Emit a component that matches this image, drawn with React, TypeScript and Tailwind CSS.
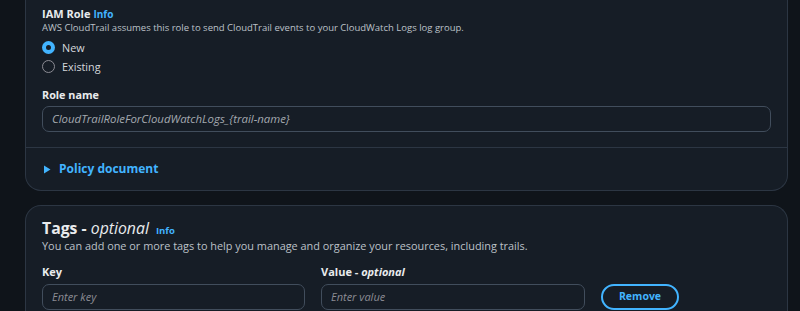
import React from "react";

const font = { fontFamily: '"Open Sans", "Noto Sans", sans-serif' };

function Radio({ checked, label }: { checked?: boolean; label: string }) {
  return (
    <div className="flex items-center gap-[7px] h-[19px]">
      {checked ? (
        <span className="w-[13px] h-[13px] rounded-full bg-[#42b4ff] flex items-center justify-center">
          <span className="w-[5px] h-[5px] rounded-full bg-[#161d26]" />
        </span>
      ) : (
        <span className="w-[13px] h-[13px] rounded-full border border-[#8c8c94]" />
      )}
      <span className="text-[10.8px] leading-[19px] text-[#d5d8dc]">{label}</span>
    </div>
  );
}

export default function App() {
  return (
    <div
      className="w-[800px] h-[311px] bg-[#0f141a] overflow-hidden pl-[25px] pr-[12px] flex flex-col"
      style={font}
    >
      <div className="border border-t-0 border-[#2c3643] rounded-b-[16px] bg-[#161d26] shrink-0">
        <div className="px-[16px] pt-[6px] pb-[15px]">
          <div className="flex items-baseline gap-[3px] h-[16px] leading-[16px]">
            <span className="text-[11px] font-bold text-[#e9ebed]">IAM Role</span>
            <span className="text-[10px] font-bold text-[#42b4ff]">Info</span>
          </div>
          <div className="text-[9.5px] text-[#bcc1c8] h-[12px] leading-[12px]">
            AWS CloudTrail assumes this role to send CloudTrail events to your CloudWatch Logs log group.
          </div>
          <div className="flex flex-col mt-[4px]">
            <Radio checked label="New" />
            <Radio label="Existing" />
          </div>
          <div className="mt-[11px] text-[10.8px] font-bold text-[#e9ebed] h-[16px] leading-[16px]">
            Role name
          </div>
          <div className="mt-[3px] h-[26px] rounded-[7px] border border-[#414d5c] flex items-center px-[9px]">
            <span className="text-[11.4px] italic text-[#a4a9b0]">
              CloudTrailRoleForCloudWatchLogs_{"{trail-name}"}
            </span>
          </div>
        </div>
        <div className="border-t border-[#2c3643] h-[43px] flex items-center px-[17px] gap-[8px]">
          <svg width="8" height="9" viewBox="0 0 8 9">
            <path d="M1 0.5 L7.5 4.5 L1 8.5 Z" fill="#42b4ff" />
          </svg>
          <span className="text-[12px] font-bold text-[#42b4ff]">Policy document</span>
        </div>
      </div>
      <div className="mt-[14px] border border-b-0 border-[#2c3643] rounded-t-[16px] bg-[#161d26] flex-1 px-[16px] pt-[11px]">
        <div className="flex items-baseline gap-[7px] h-[22px] leading-[22px]">
          <span className="text-[15.8px] font-bold text-[#e9ebed]">
            Tags - <span className="italic font-medium">optional</span>
          </span>
          <span className="text-[9.5px] font-bold text-[#42b4ff]">Info</span>
        </div>
        <div className="text-[10.9px] text-[#bcc1c8] h-[14px] leading-[14px]">
          You can add one or more tags to help you manage and organize your resources, including trails.
        </div>
        <div className="mt-[11px] flex gap-[16px]">
          <div className="w-[263px]">
            <div className="text-[11px] font-bold text-[#e9ebed] h-[16px] leading-[16px]">Key</div>
            <div className="mt-[4px] h-[26px] rounded-[7px] border border-[#414d5c] flex items-center px-[9px]">
              <span className="text-[11px] italic text-[#8c8c94]">Enter key</span>
            </div>
          </div>
          <div className="w-[264px]">
            <div className="text-[11px] font-bold text-[#e9ebed] h-[16px] leading-[16px]">
              Value - <span className="italic">optional</span>
            </div>
            <div className="mt-[4px] h-[26px] rounded-[7px] border border-[#414d5c] flex items-center px-[9px]">
              <span className="text-[11px] italic text-[#8c8c94]">Enter value</span>
            </div>
          </div>
          <div className="pt-[20px]">
            <div className="w-[78px] h-[26px] rounded-full border-2 border-[#42b4ff] flex items-center justify-center">
              <span className="text-[10.5px] font-bold text-[#42b4ff]">Remove</span>
            </div>
          </div>
        </div>
      </div>
    </div>
  );
}
